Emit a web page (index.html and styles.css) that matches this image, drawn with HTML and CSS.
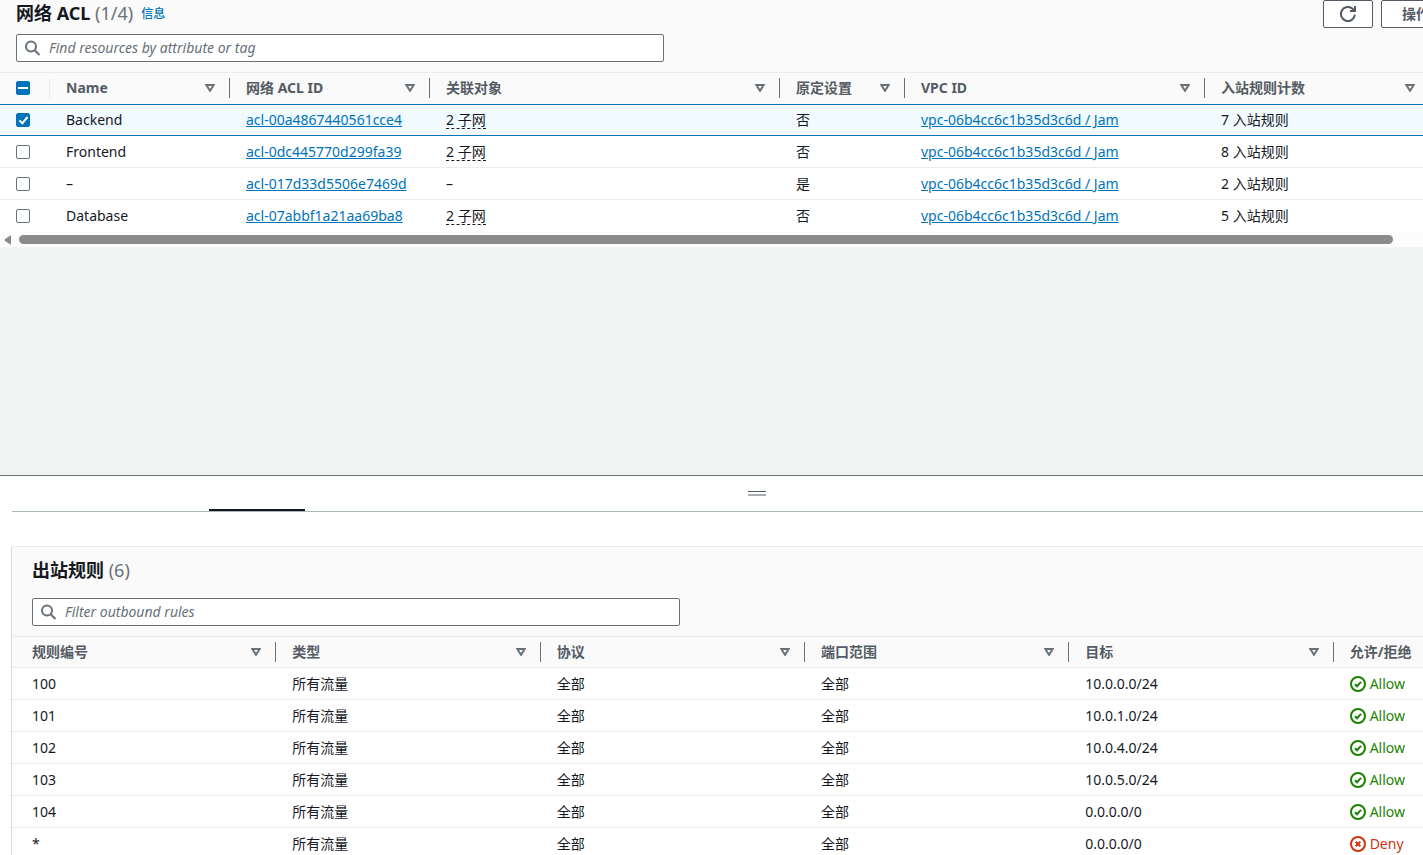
FILE: index.html
```html
<!DOCTYPE html>
<html lang="zh-CN">
<head>
<meta charset="utf-8">
<title>网络 ACL</title>
<link rel="stylesheet" href="styles.css">
</head>
<body>
<svg class="sprite" aria-hidden="true">
  <symbol id="search" viewBox="0 0 16 16"><circle cx="6" cy="6.5" r="5" /><path d="M9.7 10.2 14.5 15" /></symbol>
  <symbol id="sort" viewBox="0 0 10 8"><path d="M1.3 1H8.7L5 6.8Z" /></symbol>
  <symbol id="allow" viewBox="0 0 16 16"><circle cx="8" cy="8" r="7" /><path d="M5 8.2 7 10.2 11 5.8" /></symbol>
  <symbol id="deny" viewBox="0 0 16 16"><circle cx="8" cy="8" r="7" /><path d="M5.7 5.7l4.6 4.6M10.3 5.7l-4.6 4.6" /></symbol>
</svg>
<main class="app">
  <section class="resources">
    <header class="resources-header">
      <div class="title-row">
        <h1 class="title">网络 ACL <span class="count">(1/4)</span></h1>
        <a class="info" href="#info">信息</a>
        <div class="actions">
          <button class="button refresh" type="button" aria-label="刷新"><svg class="refresh-icon" viewBox="0 0 16 16"><path d="M14.9 8.6A7 7 0 1 1 12.6 2.8L14.6 5" /><path d="M15 0V5H10" /></svg></button>
          <button class="button menu" type="button">操作</button>
        </div>
      </div>
      <label class="search"><svg class="search-icon"><use href="#search" /></svg><input class="search-input" type="text" placeholder="Find resources by attribute or tag" aria-label="Find resources by attribute or tag"></label>
    </header>
    <div class="table-scroll">
      <table class="table acl-table">
        <colgroup><col class="col-check"><col class="col-name"><col class="col-id"><col class="col-assoc"><col class="col-default"><col class="col-vpc"><col class="col-count"></colgroup>
        <thead>
          <tr>
            <th class="check-cell"><input class="check mixed" type="checkbox" aria-label="全选"></th>
            <th><div class="head">Name<svg class="sort"><use href="#sort" /></svg></div></th>
            <th><div class="head">网络 ACL ID<svg class="sort"><use href="#sort" /></svg></div></th>
            <th><div class="head">关联对象<svg class="sort"><use href="#sort" /></svg></div></th>
            <th><div class="head">原定设置<svg class="sort"><use href="#sort" /></svg></div></th>
            <th><div class="head">VPC ID<svg class="sort"><use href="#sort" /></svg></div></th>
            <th><div class="head">入站规则计数<svg class="sort"><use href="#sort" /></svg></div></th>
          </tr>
        </thead>
        <tbody>
          <tr class="selected"><td class="check-cell"><input class="check" type="checkbox" aria-label="Backend" checked></td><td>Backend</td><td><a class="link" href="#acl">acl-00a4867440561cce4</a></td><td><span class="hint">2 子网</span></td><td>否</td><td><a class="link" href="#vpc">vpc-06b4cc6c1b35d3c6d / Jam</a></td><td>7 入站规则</td></tr>
          <tr><td class="check-cell"><input class="check" type="checkbox" aria-label="Frontend"></td><td>Frontend</td><td><a class="link" href="#acl">acl-0dc445770d299fa39</a></td><td><span class="hint">2 子网</span></td><td>否</td><td><a class="link" href="#vpc">vpc-06b4cc6c1b35d3c6d / Jam</a></td><td>8 入站规则</td></tr>
          <tr><td class="check-cell"><input class="check" type="checkbox" aria-label="acl-017d33d5506e7469d"></td><td>–</td><td><a class="link" href="#acl">acl-017d33d5506e7469d</a></td><td>–</td><td>是</td><td><a class="link" href="#vpc">vpc-06b4cc6c1b35d3c6d / Jam</a></td><td>2 入站规则</td></tr>
          <tr><td class="check-cell"><input class="check" type="checkbox" aria-label="Database"></td><td>Database</td><td><a class="link" href="#acl">acl-07abbf1a21aa69ba8</a></td><td><span class="hint">2 子网</span></td><td>否</td><td><a class="link" href="#vpc">vpc-06b4cc6c1b35d3c6d / Jam</a></td><td>5 入站规则</td></tr>
        </tbody>
      </table>
    </div>
    <div class="scrollbar" aria-hidden="true"><svg class="scroll-arrow" viewBox="0 0 7 10"><path d="M7 1V9Q7 10 6 9.3L1 6Q0 5 1 4L6 .7Q7 0 7 1Z" /></svg><div class="scroll-thumb"></div></div>
  </section>

  <section class="split-panel">
    <div class="handle-row"><svg class="handle" viewBox="0 0 18 4"><path class="handle-dark" d="M0 0H18V1H0Z" /><path class="handle-light" d="M0 3H18V5H0Z" /></svg></div>
    <div class="tabs"><div class="tab-active"></div></div>
    <div class="rules">
      <header class="rules-header">
        <h2 class="title">出站规则 <span class="count">(6)</span></h2>
        <label class="search"><svg class="search-icon"><use href="#search" /></svg><input class="search-input" type="text" placeholder="Filter outbound rules" aria-label="Filter outbound rules"></label>
      </header>
      <table class="table rules-table">
        <thead>
          <tr>
            <th><div class="head">规则编号<svg class="sort"><use href="#sort" /></svg></div></th>
            <th><div class="head">类型<svg class="sort"><use href="#sort" /></svg></div></th>
            <th><div class="head">协议<svg class="sort"><use href="#sort" /></svg></div></th>
            <th><div class="head">端口范围<svg class="sort"><use href="#sort" /></svg></div></th>
            <th><div class="head">目标<svg class="sort"><use href="#sort" /></svg></div></th>
            <th><div class="head">允许/拒绝</div></th>
          </tr>
        </thead>
        <tbody>
          <tr><td>100</td><td>所有流量</td><td>全部</td><td>全部</td><td>10.0.0.0/24</td><td><span class="status allow"><svg class="status-icon"><use href="#allow" /></svg>Allow</span></td></tr>
          <tr><td>101</td><td>所有流量</td><td>全部</td><td>全部</td><td>10.0.1.0/24</td><td><span class="status allow"><svg class="status-icon"><use href="#allow" /></svg>Allow</span></td></tr>
          <tr><td>102</td><td>所有流量</td><td>全部</td><td>全部</td><td>10.0.4.0/24</td><td><span class="status allow"><svg class="status-icon"><use href="#allow" /></svg>Allow</span></td></tr>
          <tr><td>103</td><td>所有流量</td><td>全部</td><td>全部</td><td>10.0.5.0/24</td><td><span class="status allow"><svg class="status-icon"><use href="#allow" /></svg>Allow</span></td></tr>
          <tr><td>104</td><td>所有流量</td><td>全部</td><td>全部</td><td>0.0.0.0/0</td><td><span class="status allow"><svg class="status-icon"><use href="#allow" /></svg>Allow</span></td></tr>
          <tr><td>*</td><td>所有流量</td><td>全部</td><td>全部</td><td>0.0.0.0/0</td><td><span class="status deny"><svg class="status-icon"><use href="#deny" /></svg>Deny</span></td></tr>
        </tbody>
      </table>
    </div>
  </section>
</main>
</body>
</html>
```
FILE: styles.css
```css
*, *::before, *::after { box-sizing: border-box; }

body {
  margin: 0;
  background: #f2f3f3;
  color: #16191f;
  font-family: "Noto Sans", "Noto Sans CJK SC", sans-serif;
  font-size: 14px;
  line-height: 20px;
}

.sprite { display: none; }

.app {
  display: flex;
  flex-direction: column;
  height: 100vh;
  overflow: hidden;
}

.resources { flex: 1; min-height: 0; overflow: hidden; }

.resources-header {
  display: flex;
  flex-direction: column;
  gap: 6px;
  padding: 0 16px 10px;
  background: #fafafa;
}

.title-row {
  display: flex;
  align-items: flex-start;
  height: 28px;
  margin-right: -48px;
}

.title { margin: 0; font-size: 18px; line-height: 26px; font-weight: 700; }
.count { color: #687078; font-weight: 400; }

.info {
  margin-left: 8px;
  color: #0073bb;
  font-size: 12px;
  line-height: 28px;
  font-weight: 500;
  text-decoration: none;
}

.actions { display: flex; gap: 8px; margin-left: auto; }

.button {
  display: flex;
  align-items: center;
  justify-content: center;
  height: 28px;
  padding: 0;
  border: 1px solid #545b64;
  border-radius: 2px;
  background: #fff;
  color: #545b64;
  font: inherit;
  font-weight: 700;
}

.refresh { width: 50px; }
.menu { width: 74px; justify-content: flex-start; padding-left: 20px; }
.refresh-icon { width: 16px; height: 16px; fill: none; stroke: #545b64; stroke-width: 2; }

.search {
  display: flex;
  align-items: center;
  gap: 8px;
  width: 100%;
  max-width: 648px;
  height: 28px;
  padding: 0 8px;
  border: 1px solid #687078;
  border-radius: 2px;
  background: #fff;
}

.search-icon { flex: none; width: 16px; height: 16px; fill: none; stroke: #687078; stroke-width: 2; }

.search-input {
  flex: 1;
  min-width: 0;
  padding: 0;
  border: 0;
  outline: 0;
  background: none;
  color: inherit;
  font: inherit;
}

.search-input::placeholder { color: #687078; font-style: italic; opacity: 1; }

.table { border-collapse: separate; border-spacing: 0; table-layout: fixed; }

.table th {
  height: 32px;
  padding: 0 0 2px;
  border-top: 1px solid #eaeded;
  background: #fafafa;
  color: #545b64;
  font-weight: 700;
  text-align: left;
}

.table td {
  height: 32px;
  padding: 0 16px;
  border-bottom: 1px solid #eaeded;
  background: #fff;
  white-space: nowrap;
}

.head {
  display: flex;
  align-items: center;
  justify-content: space-between;
  height: 20px;
  padding: 0 14px 0 16px;
  border-right: 1px solid #687078;
}

.sort { width: 10px; height: 8px; fill: none; stroke: #687078; stroke-width: 2; }

.table-scroll { overflow: hidden; }
.acl-table { width: 1430px; min-width: 100%; }
.col-check { width: 50px; }
.col-name { width: 180px; }
.col-id { width: 200px; }
.col-assoc { width: 350px; }
.col-default { width: 125px; }
.col-vpc { width: 300px; }

.table .check-cell { padding-left: 16px; padding-right: 0; }
.table th.check-cell { background: linear-gradient(#eaeded, #eaeded) right center / 1px 20px no-repeat #fafafa; }
.acl-table tbody tr:last-child td { border-bottom-color: #fff; }

.table .selected td {
  border-top: 1px solid #0073bb;
  border-bottom-color: #0073bb;
  background: #f1faff;
}

.check {
  display: block;
  appearance: none;
  width: 14px;
  height: 14px;
  margin: 0;
  border: 1px solid #687078;
  border-radius: 2px;
  background: #fff;
}

.check:checked, .mixed { display: grid; place-items: center; border-color: #0073bb; background: #0073bb; }
.mixed::before { content: ""; width: 10px; height: 2px; background: #fff; }

.check:checked::before {
  content: "";
  width: 5px;
  height: 9px;
  margin-bottom: 2px;
  border: solid #fff;
  border-width: 0 2px 2px 0;
  transform: rotate(40deg);
}

.link { color: #0073bb; text-decoration: underline; text-underline-offset: 1px; }
.hint { display: inline-block; line-height: 17px; border-bottom: 1px dashed #16191f; }

.scrollbar {
  display: flex;
  align-items: center;
  gap: 8px;
  height: 15px;
  padding: 0 30px 0 4px;
  background: #fcfcfc;
}

.scroll-arrow { width: 7px; height: 10px; fill: #8b8b8b; }
.scroll-thumb { flex: 1; height: 9px; border-radius: 5px; background: #8b8b8b; }

.split-panel {
  flex: none;
  height: 380px;
  padding-left: 12px;
  overflow: hidden;
  border-top: 1px solid #687078;
  background: #fff;
}

.handle-row { display: flex; justify-content: center; padding: 15px 0 14px; margin-left: 79px; }
.handle { display: block; width: 18px; height: 4px; overflow: visible; }
.handle-dark { fill: #545b64; }
.handle-light { fill: #aaadb3; }

.tabs { border-bottom: 1px solid #aab7b8; }
.tab-active { width: 96px; height: 2px; margin-left: 197px; background: #16191f; }

.rules {
  width: 1588px;
  min-width: 100%;
  margin: 34px 0 0 -1px;
  border: 1px solid #d5dbdb;
  border-top-color: #eaeded;
  border-radius: 2px 0 0;
}

.rules-header {
  display: flex;
  flex-direction: column;
  gap: 15px;
  padding: 10px 20px;
  background: #fafafa;
}

.rules-table { width: 100%; }
.rules-table th { padding-bottom: 0; border-bottom: 1px solid #eaeded; }
.rules-table th:first-child .head, .rules-table td:first-child { padding-left: 20px; }
.rules-table th:last-child .head { border-right: 0; }

.status { display: flex; align-items: center; gap: 4px; }
.status-icon { width: 16px; height: 16px; fill: none; stroke: currentColor; stroke-width: 2; }
.allow { color: #1d8102; }
.deny { color: #d13212; }
```
